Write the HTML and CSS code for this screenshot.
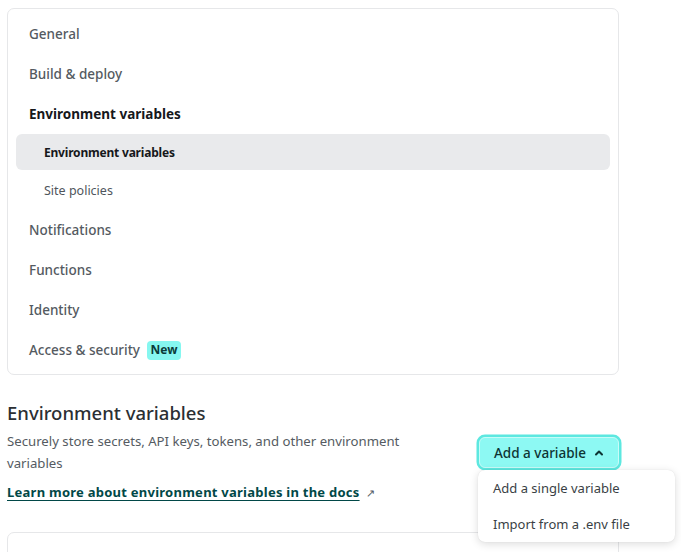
FILE: index.html
```html
<!DOCTYPE html>
<html lang="en">
<head>
<meta charset="utf-8">
<title>Environment variables</title>
<link rel="stylesheet" href="styles.css">
</head>
<body>
<div class="page">
  <nav class="side-card">
    <a class="nav-item">General</a>
    <a class="nav-item">Build &amp; deploy</a>
    <a class="nav-item nav-item--active">Environment variables</a>
    <div class="sub-list">
      <a class="sub-item sub-item--active">Environment variables</a>
      <a class="sub-item">Site policies</a>
    </div>
    <a class="nav-item">Notifications</a>
    <a class="nav-item">Functions</a>
    <a class="nav-item">Identity</a>
    <a class="nav-item">Access &amp; security <span class="badge">New</span></a>
  </nav>

  <section class="env">
    <h2 class="env-title">Environment variables</h2>
    <div class="env-row">
      <p class="env-desc">Securely store secrets, API keys, tokens, and other environment variables</p>
      <div class="menu-wrap">
        <button class="add-btn">Add a variable
          <svg class="chev" width="10" height="10" viewBox="0 0 10 10"><path d="M2 6.5 L5 3.5 L8 6.5" fill="none" stroke="#0d3433" stroke-width="2" stroke-linecap="round" stroke-linejoin="round"/></svg>
        </button>
        <div class="menu">
          <div class="menu-item">Add a single variable</div>
          <div class="menu-item">Import from a .env file</div>
        </div>
      </div>
    </div>
    <p class="env-link-line"><a class="env-link">Learn more about environment variables in the docs</a><span class="ext">↗</span></p>
    <div class="list-card"></div>
  </section>
</div>
</body>
</html>
```

FILE: styles.css
```css
* { box-sizing: border-box; }
html, body { margin: 0; padding: 0; background: #ffffff; }
body {
  font-family: "Noto Sans", "Open Sans", sans-serif;
  color: #2e3338;
  overflow: hidden;
  height: 552px;
}
.page {
  width: 612px;
  margin: 8px 0 0 7px;
}
.side-card {
  display: flex;
  flex-direction: column;
  border: 1px solid #e6e7e9;
  border-radius: 7px;
  padding: 5px 8px 4px;
}
.nav-item {
  display: flex;
  align-items: center;
  height: 40px;
  padding-left: 13px;
  font-size: 13.5px;
  color: #545a61;
  font-weight: 500;
}
.nav-item--active {
  color: #16181b;
  font-weight: 700;
}
.sub-list {
  display: flex;
  flex-direction: column;
  gap: 2px;
  padding-bottom: 2px;
}
.sub-item {
  display: flex;
  align-items: center;
  height: 36px;
  padding-left: 28px;
  font-size: 12.5px;
  color: #4f555c;
  border-radius: 6px;
}
.sub-item--active {
  background: #e9eaec;
  color: #16181b;
  font-weight: 700;
  font-size: 12px;
  letter-spacing: -0.2px;
}
.badge {
  display: inline-block;
  margin-left: 7px;
  padding: 1.5px 3.5px;
  line-height: 16px;
  font-size: 12px;
  font-weight: 700;
  color: #0b3b3a;
  background: #86f7f0;
  border-radius: 4px;
}
.env { margin-top: 25px; }
.env-title {
  margin: 0;
  font-size: 18.5px;
  font-weight: 500;
  line-height: 26px;
  color: #2b2f33;
}
.env-row {
  display: flex;
  align-items: center;
  justify-content: space-between;
  margin-top: 4px;
}
.env-desc {
  margin: 0;
  width: 415px;
  font-size: 13.2px;
  line-height: 22px;
  color: #555b62;
}
.menu-wrap { position: relative; }
.add-btn {
  display: flex;
  align-items: center;
  gap: 8px;
  height: 31px;
  padding: 2px 14px 0 14px;
  font-family: inherit;
  font-size: 13.5px;
  font-weight: 500;
  color: #0d3433;
  background: #8df9f3;
  border: 1px solid #c8fbf8;
  border-radius: 6px;
  box-shadow: 0 0 0 2.5px #5de8e0;
}
.chev { display: block; }
.menu {
  position: absolute;
  top: 33px;
  left: -1px;
  width: 197px;
  padding: 0;
  background: #ffffff;
  border-radius: 7px;
  box-shadow: 0 2px 8px rgba(0,0,0,0.14), 0 0 1px rgba(0,0,0,0.12);
  z-index: 2;
}
.menu-item {
  height: 36px;
  display: flex;
  align-items: center;
  padding-left: 15px;
  font-size: 13px;
  color: #3a3f45;
}
.env-link-line {
  margin: 8px 0 0;
  font-size: 13px;
  line-height: 20px;
}
.env-link {
  font-weight: 700;
  color: #014847;
  text-decoration: underline;
  text-underline-offset: 3px;
  letter-spacing: 0.25px;
}
.ext {
  margin-left: 6px;
  font-size: 11px;
  color: #555b62;
}
.list-card {
  margin-top: 29px;
  height: 40px;
  border: 1px solid #e6e7e9;
  border-radius: 7px;
}
```
